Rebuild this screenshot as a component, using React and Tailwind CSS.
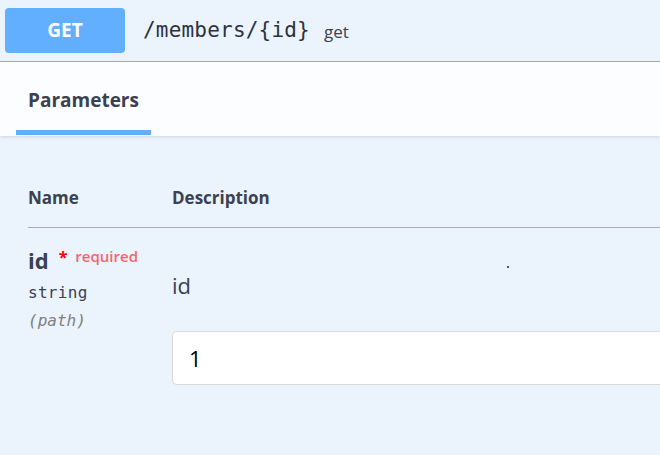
export default function App() {
  const sans = { fontFamily: '"Open Sans", "Noto Sans", sans-serif' };
  return (
    <div
      className="relative w-[660px] h-[455px] overflow-hidden bg-[#ebf3fd] text-[#3b4151]"
      style={sans}
    >
      {/* summary bar */}
      <div className="flex h-[62px] items-center border-b border-[#7cb9e6] pl-[5px]">
        <div className="flex h-[45px] w-[120px] items-center justify-center rounded-[4px] bg-[#61affe] text-[19px] font-bold text-white">
          GET
        </div>
        <span className="ml-[18px] font-['DejaVu_Sans_Mono',monospace] text-[21px] tracking-[0.2px] text-[#2c3242]">
          /members/{"{id}"}
        </span>
        <span className="ml-[14px] mt-[2px] text-[17px] text-[#3b4151]">get</span>
      </div>

      {/* tab header */}
      <div className="h-[74px] bg-[#fcfdff] pl-[16px] shadow-[0_1px_3px_rgba(0,0,0,0.12)]">
        <div className="flex h-full w-[135px] flex-col">
          <div className="flex flex-1 items-center pl-[12px] pt-[8px] text-[19px] font-bold text-[#3b4151]">
            Parameters
          </div>
          <div className="mb-[1px] h-[5px] bg-[#61affe]" />
        </div>
      </div>

      {/* table */}
      <div className="pl-[28px] pt-[50px]">
        <div className="flex border-b border-[#a8abb2] pb-[17px] text-[17px] font-bold leading-[24px]">
          <div className="w-[144px]">Name</div>
          <div>Description</div>
        </div>

        <div className="flex pt-[17px]">
          <div className="w-[144px]">
            <div className="flex items-start">
              <span className="text-[22px] font-bold leading-[30px]">id</span>
              <span className="ml-[10px] mt-[4px] text-[16px] font-bold leading-none text-[#ff0000]">*</span>
              <span className="ml-[8px] text-[15px] font-semibold leading-[22px] text-[#ff0000]/60">required</span>
            </div>
            <div className="mt-[5px] font-['DejaVu_Sans_Mono',monospace] text-[16px] leading-[26px] tracking-[0.3px]">
              string
            </div>
            <div className="mt-[2px] font-['DejaVu_Sans_Mono',monospace] text-[16px] italic leading-[26px] text-[#808080]">
              (path)
            </div>
          </div>
          <div className="flex-1 pt-[25px]">
            <div className="text-[22px] leading-[30px] text-[#3b4151]">id</div>
            <div className="mt-[31px] flex h-[54px] items-center rounded-l-[5px] border border-r-0 border-[#d9d9d9] bg-white pl-[16px] text-[22px] text-black">
              1
            </div>
          </div>
        </div>
      </div>

      <div className="absolute left-[507px] top-[266px] h-[2px] w-[2px] rounded-full bg-[#1a1aa0]" />
    </div>
  );
}
